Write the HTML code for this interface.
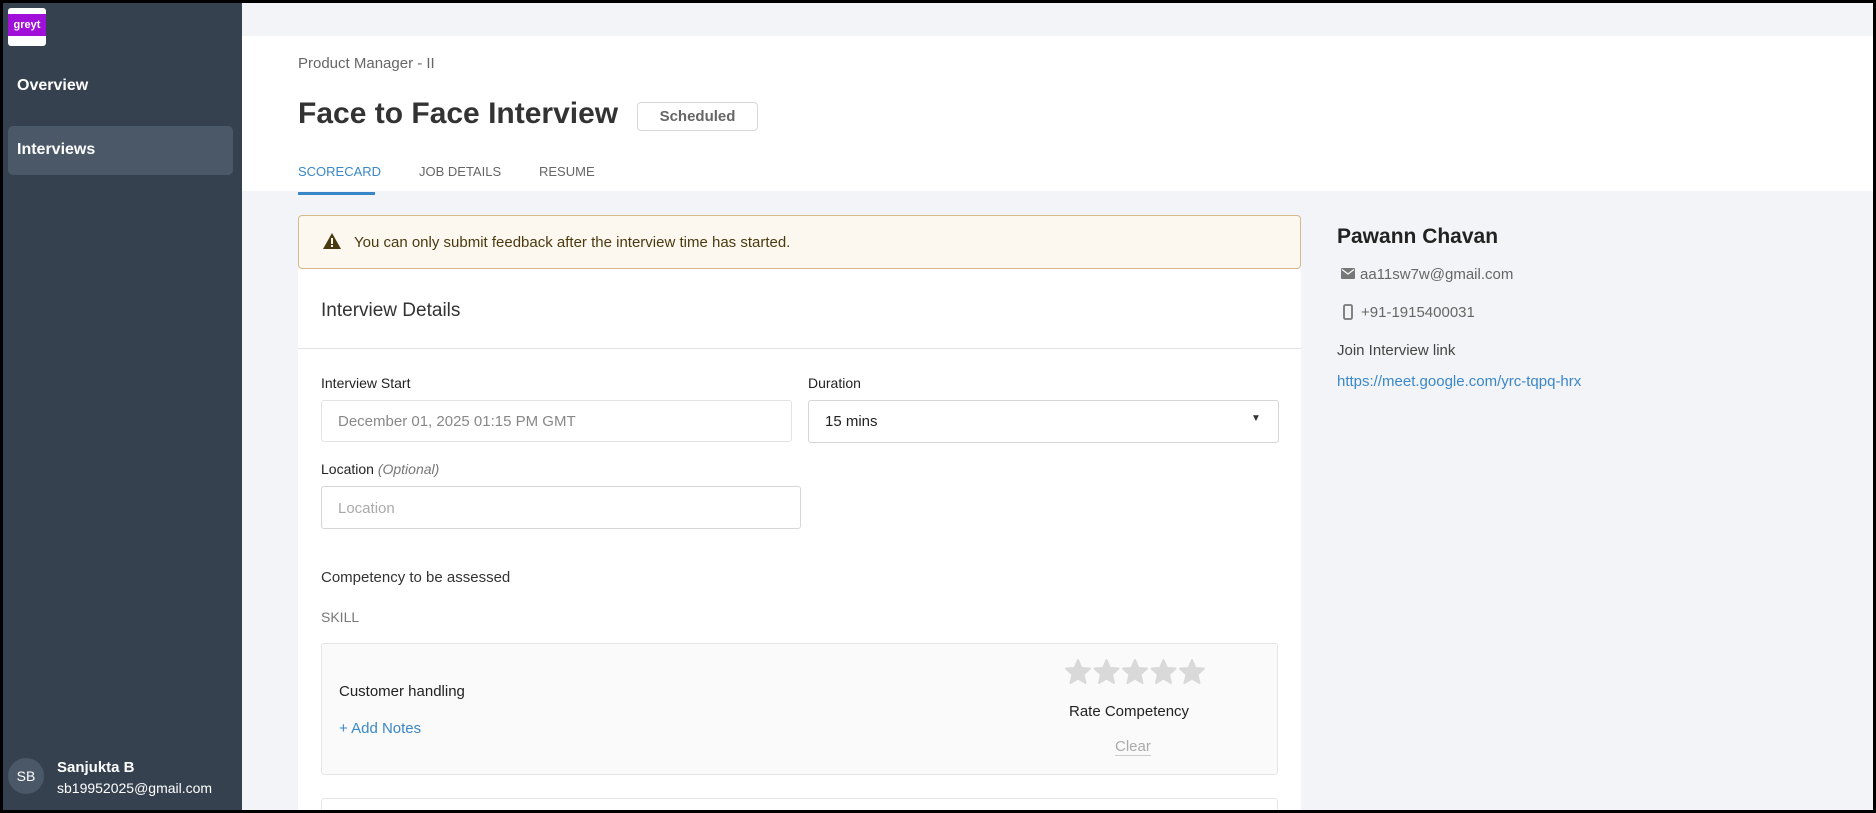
<!DOCTYPE html>
<html><head><meta charset="utf-8"><style>
*{box-sizing:border-box;margin:0;padding:0}
body{width:1876px;height:813px;background:#000;font-family:"Liberation Sans",sans-serif;position:relative;overflow:hidden}
.a{position:absolute}
#frame{position:absolute;left:3px;top:3px;width:1870px;height:807px;background:#f3f4f7;overflow:hidden}
#side{position:absolute;left:0;top:0;width:239px;height:807px;background:#36414f}
.t{position:absolute;white-space:nowrap}
</style></head><body>
<div id="frame">
 <div id="side">
  <div class="a" style="left:5px;top:5px;width:38px;height:38px;background:#fff;border-radius:3px;overflow:hidden">
   <div class="a" style="left:0;top:6px;width:38px;height:22px;background:#a010d8;color:#fff;font-size:11px;font-weight:bold;text-align:center;line-height:22px">greyt</div>
  </div>
  <div class="t" style="left:14px;top:74px;color:#fff;font-size:16px;font-weight:bold">Overview</div>
  <div class="a" style="left:5px;top:123px;width:225px;height:49px;background:#4b5868;border-radius:5px"></div>
  <div class="t" style="left:14px;top:138px;color:#fff;font-size:16px;font-weight:bold">Interviews</div>
  <div class="a" style="left:5px;top:755px;width:36px;height:36px;border-radius:50%;background:#4b5868;color:#fff;font-size:14px;text-align:center;line-height:36px">SB</div>
  <div class="t" style="left:54px;top:756px;color:#fff;font-size:15px;font-weight:bold">Sanjukta B</div>
  <div class="t" style="left:54px;top:777px;color:#fff;font-size:14px">sb19952025@gmail.com</div>
 </div>
 <div class="a" style="left:239px;top:33px;width:1631px;height:155px;background:#fff"></div>
 <div class="t" style="left:295px;top:52px;color:#666;font-size:15px">Product Manager - II</div>
 <div class="t" style="left:295px;top:94px;color:#333;font-size:30px;font-weight:bold">Face to Face Interview</div>
 <div class="a" style="left:634px;top:99px;width:121px;height:29px;border:1px solid #d8d8d8;border-radius:4px;color:#666;font-size:15px;font-weight:bold;text-align:center;line-height:27px">Scheduled</div>
 <div class="t" style="left:295px;top:161px;color:#3a87c8;font-size:13px">SCORECARD</div>
 <div class="t" style="left:416px;top:161px;color:#666;font-size:13px">JOB DETAILS</div>
 <div class="t" style="left:536px;top:161px;color:#666;font-size:13px">RESUME</div>
 <div class="a" style="left:295px;top:189px;width:77px;height:3px;background:#3a87c8"></div>

 <div class="a" style="left:295px;top:212px;width:1003px;height:600px;background:#fff;border-radius:4px"></div>
 <div class="a" style="left:295px;top:212px;width:1003px;height:54px;background:#fdf8ef;border:1px solid #d4b98f;border-radius:4px"></div>
 <svg class="a" style="left:320px;top:230px" width="18" height="16" viewBox="0 0 18 16"><path d="M9 0L18 16H0Z" fill="#4a3a10"/><rect x="8" y="5" width="2" height="6" fill="#fdf8ef"/><rect x="8" y="12" width="2" height="2" fill="#fdf8ef"/></svg>
 <div class="t" style="left:351px;top:231px;color:#4a3a10;font-size:15px">You can only submit feedback after the interview time has started.</div>
 <div class="t" style="left:318px;top:297px;color:#333;font-size:19px">Interview Details</div>
 <div class="a" style="left:295px;top:345px;width:1003px;height:1px;background:#e3e3e3"></div>
 <div class="t" style="left:318px;top:372px;color:#222;font-size:14px">Interview Start</div>
 <div class="t" style="left:805px;top:372px;color:#222;font-size:14px">Duration</div>
 <div class="a" style="left:318px;top:397px;width:471px;height:42px;border:1px solid #e3e3e3;border-radius:3px"></div>
 <div class="t" style="left:335px;top:410px;color:#888;font-size:15px">December 01, 2025 01:15 PM GMT</div>
 <div class="a" style="left:805px;top:397px;width:471px;height:43px;border:1px solid #d6d6d6;border-radius:3px"></div>
 <div class="t" style="left:822px;top:410px;color:#222;font-size:15px">15 mins</div>
 <div class="t" style="left:1248px;top:410px;color:#333;font-size:10px">▼</div>
 <div class="t" style="left:318px;top:458px;color:#222;font-size:14px">Location <i style="color:#777">(Optional)</i></div>
 <div class="a" style="left:318px;top:483px;width:480px;height:43px;border:1px solid #d6d6d6;border-radius:3px"></div>
 <div class="t" style="left:335px;top:497px;color:#aaa;font-size:15px">Location</div>
 <div class="t" style="left:318px;top:566px;color:#333;font-size:15px">Competency to be assessed</div>
 <div class="t" style="left:318px;top:606px;color:#777;font-size:14px">SKILL</div>
 <div class="a" style="left:318px;top:640px;width:957px;height:132px;background:#fafafa;border:1px solid #e6e6e6;border-radius:3px"></div>
 <div class="t" style="left:336px;top:680px;color:#222;font-size:15px">Customer handling</div>
 <div class="t" style="left:336px;top:717px;color:#3a87c8;font-size:15px">+ Add Notes</div>
 <svg class="a" style="left:1061px;top:655px" width="144" height="28" viewBox="0 0 144 28"><g fill="#d9d9d9" stroke="#d9d9d9" stroke-width="2" stroke-linejoin="round">
  <path id="s" d="M14 2L17.5 10L26 10.5L19.5 16.5L21.5 25L14 20.5L6.5 25L8.5 16.5L2 10.5L10.5 10Z"/>
  <use href="#s" x="28.5"/><use href="#s" x="57"/><use href="#s" x="85.5"/><use href="#s" x="114"/></g></svg>
 <div class="t" style="left:1066px;top:700px;color:#222;font-size:15px">Rate Competency</div>
 <div class="t" style="left:1112px;top:735px;color:#aaa;font-size:15px;border-bottom:1px solid #ccc">Clear</div>
 <div class="a" style="left:318px;top:795px;width:957px;height:40px;border:1px solid #e6e6e6;border-radius:3px"></div>

 <div class="t" style="left:1334px;top:222px;color:#222;font-size:21px;font-weight:bold">Pawann Chavan</div>
 <svg class="a" style="left:1338px;top:265px" width="14" height="11" viewBox="0 0 14 11"><rect width="14" height="11" rx="1" fill="#777"/><path d="M1 1.5L7 6L13 1.5" stroke="#f3f4f7" stroke-width="1.4" fill="none"/></svg>
 <div class="t" style="left:1357px;top:263px;color:#666;font-size:15px">aa11sw7w@gmail.com</div>
 <svg class="a" style="left:1340px;top:301px" width="10" height="16" viewBox="0 0 10 16"><rect x="1" y="1" width="8" height="14" rx="1.5" fill="none" stroke="#777" stroke-width="1.8"/></svg>
 <div class="t" style="left:1358px;top:301px;color:#666;font-size:15px">+91-1915400031</div>
 <div class="t" style="left:1334px;top:339px;color:#444;font-size:15px">Join Interview link</div>
 <div class="t" style="left:1334px;top:370px;color:#3a87c8;font-size:15px">https://meet.google.com/yrc-tqpq-hrx</div>
</div>
</body></html>
